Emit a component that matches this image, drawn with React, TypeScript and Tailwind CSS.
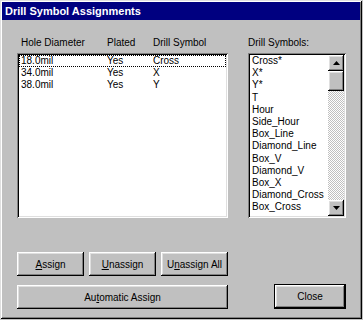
import React from "react";

const raised =
  "shadow-[inset_-1px_-1px_0_#000,inset_1px_1px_0_#fff,inset_-2px_-2px_0_#808080,inset_2px_2px_0_#dfdfdf]";
const sunken =
  "shadow-[inset_1px_1px_0_#808080,inset_-1px_-1px_0_#fff,inset_2px_2px_0_#000,inset_-2px_-2px_0_#dfdfdf]";

function Btn({ children, className = "" }: { children: React.ReactNode; className?: string }) {
  return (
    <div className={`bg-[#c0c0c0] ${raised} flex items-center justify-center text-black ${className}`}>
      {children}
    </div>
  );
}

function Arrow({ up }: { up?: boolean }) {
  return (
    <svg width="7" height="4" viewBox="0 0 7 4">
      {up ? <polygon points="3.5,0 7,4 0,4" fill="#000" /> : <polygon points="0,0 7,0 3.5,4" fill="#000" />}
    </svg>
  );
}

const holes = [
  ["18.0mil", "Yes", "Cross"],
  ["34.0mil", "Yes", "X"],
  ["38.0mil", "Yes", "Y"],
];

const symbols = [
  "Cross*",
  "X*",
  "Y*",
  "T",
  "Hour",
  "Side_Hour",
  "Box_Line",
  "Diamond_Line",
  "Box_V",
  "Diamond_V",
  "Box_X",
  "Diamond_Cross",
  "Box_Cross",
];

export default function App() {
  return (
    <div
      className="w-[363px] h-[320px] bg-[#c0c0c0] text-[10px] text-black overflow-hidden"
      style={{ fontFamily: '"Liberation Sans", Arial, sans-serif' }}
    >
      <div className="w-[362px] h-[319px] p-[2px] bg-[#c0c0c0] shadow-[inset_1px_1px_0_#dfdfdf,inset_-1px_-1px_0_#000,inset_2px_2px_0_#fff,inset_-2px_-2px_0_#808080] flex flex-col">
        {/* Title bar */}
        <div className="h-[18px] bg-[#000080] flex items-center pl-[3px] text-white font-bold text-[11px] leading-none">
          Drill Symbol Assignments
        </div>
        {/* Body */}
        <div className="flex pl-[15px] pt-[17px]">
          {/* Left column */}
          <div className="w-[211px] flex flex-col">
            <div className="flex h-[12px] leading-[12px] pl-[4px]">
              <div className="w-[86px]">Hole Diameter</div>
              <div className="w-[46px]">Plated</div>
              <div>Drill Symbol</div>
            </div>
            <div className={`mt-[4px] h-[165px] bg-white p-[2px] ${sunken}`}>
              {holes.map((r, i) => (
                <div
                  key={i}
                  className={`flex h-[12.2px] leading-[10px] pl-[1px] border border-dotted ${
                    i === 0 ? "border-black" : "border-transparent"
                  }`}
                >
                  <div className="w-[86px]">{r[0]}</div>
                  <div className="w-[46px]">{r[1]}</div>
                  <div>{r[2]}</div>
                </div>
              ))}
            </div>
            <div className="mt-[34px] flex gap-[5px]">
              <Btn className="w-[67px] h-[24px]">
                <span>
                  <u>A</u>ssign
                </span>
              </Btn>
              <Btn className="w-[67px] h-[24px]">
                <span>
                  <u>U</u>nassign
                </span>
              </Btn>
              <Btn className="w-[67px] h-[24px]">
                <span>
                  U<u>n</u>assign All
                </span>
              </Btn>
            </div>
            <Btn className="mt-[9px] w-[211px] h-[24px]">
              <span>
                Au<u>t</u>omatic Assign
              </span>
            </Btn>
          </div>
          {/* Right column */}
          <div className="ml-[20px] w-[98px] flex flex-col">
            <div className="h-[12px] leading-[12px]">Drill Symbols:</div>
            <div className={`mt-[4px] h-[165px] bg-white p-[2px] flex ${sunken}`}>
              <div className="flex-1 pl-[2px] overflow-hidden">
                {symbols.map((s) => (
                  <div key={s} className="h-[12.2px] leading-[12.2px] whitespace-nowrap">
                    {s}
                  </div>
                ))}
              </div>
              <div className="w-[16px] flex flex-col">
                <Btn className="h-[16px] w-[16px]">
                  <Arrow up />
                </Btn>
                <Btn className="h-[20px] w-[16px]">{null}</Btn>
                <div className="flex-1 bg-[repeating-conic-gradient(#c0c0c0_0_25%,#ffffff_0_50%)] bg-[length:2px_2px]" />
                <Btn className="h-[16px] w-[16px]">
                  <Arrow />
                </Btn>
              </div>
            </div>
            <div className="mt-[66px] flex justify-end">
              <div className="w-[72px] h-[25px] border border-black">
                <Btn className="w-full h-full">Close</Btn>
              </div>
            </div>
          </div>
        </div>
      </div>
    </div>
  );
}
